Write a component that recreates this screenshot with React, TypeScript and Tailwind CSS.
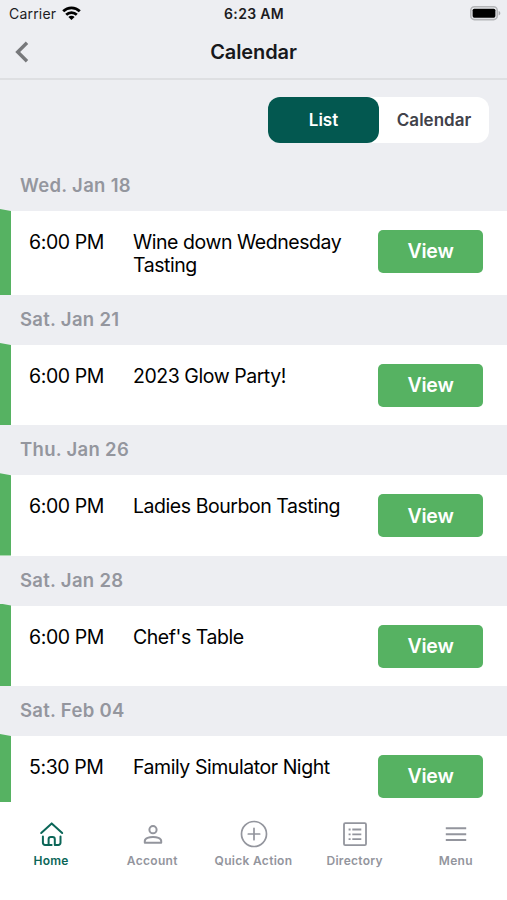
import clsx from "clsx";

const events = [
  { date: "Wed. Jan 18", time: "6:00 PM", title: "Wine down Wednesday Tasting", height: "h-[84px]" },
  { date: "Sat. Jan 21", time: "6:00 PM", title: "2023 Glow Party!", height: "h-[80.3px]" },
  { date: "Thu. Jan 26", time: "6:00 PM", title: "Ladies Bourbon Tasting", height: "h-[80.3px]" },
  { date: "Sat. Jan 28", time: "6:00 PM", title: "Chef's Table", height: "h-[80.3px]" },
  { date: "Sat. Feb 04", time: "5:30 PM", title: "Family Simulator Night", height: "h-[80.3px]" },
];

const HomeIcon = () => (
  <svg width="26" height="28" viewBox="0 0 26 28" fill="none" stroke="currentColor" strokeWidth="2" strokeLinecap="round" strokeLinejoin="round">
    <path d="M2.2 13 12.7 3.4 23.2 13" />
    <path d="M3.9 16.6v6.2a2.1 2.1 0 0 0 2.1 2.1h3.6v-5.7a2.2 2.2 0 0 1 2.2-2.2h1.8a2.2 2.2 0 0 1 2.2 2.2v5.7h3.6a2.1 2.1 0 0 0 2.1-2.1v-6.2M9.6 24.9h3" />
  </svg>
);

const AccountIcon = () => (
  <svg width="26" height="28" viewBox="0 0 26 28" fill="none" stroke="currentColor" strokeWidth="2" strokeLinejoin="round">
    <circle cx="13" cy="9.7" r="3.6" />
    <path d="M4.8 22.7v-1.8c0-2.7 4.5-4 8.2-4s8.2 1.3 8.2 4v1.8z" />
  </svg>
);

const QuickActionIcon = () => (
  <svg width="28" height="28" viewBox="0 0 28 28" fill="none" stroke="currentColor" strokeWidth="1.7" strokeLinecap="round">
    <circle cx="14" cy="14" r="12.5" />
    <path d="M14 8.3v11.4M8.3 14h11.4" />
  </svg>
);

const DirectoryIcon = () => (
  <svg width="26" height="28" viewBox="0 0 26 28" fill="none" stroke="currentColor" strokeWidth="1.8">
    <rect x="2" y="3.2" width="22" height="22" rx="1.2" />
    <path d="M6.6 9.5h2M6.6 14.3h2M6.6 19.1h2M10.3 9.5h9M10.3 14.3h9M10.3 19.1h9" />
  </svg>
);

const MenuIcon = () => (
  <svg width="26" height="28" viewBox="0 0 26 28" fill="none" stroke="currentColor" strokeWidth="2.1">
    <path d="M2.8 8.3h20.4M2.8 14.2h20.4M2.8 20h20.4" />
  </svg>
);

const tabs = [
  { label: "Home", icon: HomeIcon, active: true },
  { label: "Account", icon: AccountIcon },
  { label: "Quick Action", icon: QuickActionIcon },
  { label: "Directory", icon: DirectoryIcon },
  { label: "Menu", icon: MenuIcon },
];

const StatusBar = () => (
  <div className="grid h-[27px] grid-cols-3 items-center pl-[9px] pr-[6px] text-[14px] text-[#1c1c1f]">
    <div className="flex items-center gap-[6px]">
      <span className="tracking-[0.2px]">Carrier</span>
      <svg width="19" height="15" viewBox="0 0 19 15" fill="none" stroke="black" strokeWidth="2.7">
        <path d="M1.2 5.3a11.8 11.8 0 0 1 16.6 0M4.2 8.8a7.5 7.5 0 0 1 10.6 0" />
        <path d="M9.5 14 6.4 11a4.4 4.4 0 0 1 6.2 0z" fill="black" stroke="none" />
      </svg>
    </div>
    <span className="pr-[2px] text-center font-semibold tracking-[0.3px]">6:23 AM</span>
    <svg className="justify-self-end" width="31" height="15" viewBox="0 0 31 15">
      <rect x="0.8" y="0.8" width="26.4" height="12.8" rx="3.6" fill="none" stroke="#b4b5b8" strokeWidth="1.6" />
      <rect x="2.6" y="2.7" width="22.8" height="9" rx="1.6" fill="black" />
      <path d="M28.6 5c2.3.7 2.3 3.7 0 4.4z" fill="#a9aaad" />
    </svg>
  </div>
);

const App = () => {
  return (
    <div className="flex h-[900px] w-[507px] flex-col overflow-hidden bg-white font-['Inter','Liberation_Sans',sans-serif]">
      <header className="h-[80px] shrink-0 border-b-2 border-[#dedfe2] bg-[#edeef2]">
        <StatusBar />
        <div className="grid h-[50px] grid-cols-[60px_1fr_60px] items-center">
          <button aria-label="Back" className="pl-[15px]">
            <svg width="14" height="22" viewBox="0 0 14 22" fill="none" stroke="#77787b" strokeWidth="3.4">
              <path d="M12 1.8 2.7 11l9.3 9.2" />
            </svg>
          </button>
          <h1 className="text-center text-[20px] font-semibold tracking-[-0.1px] text-[#17181b]">Calendar</h1>
        </div>
      </header>

      <main className="h-[722px] shrink-0 overflow-hidden bg-[#edeef2]">
        <div className="flex h-[81px] justify-end pr-[18px] pt-[17px]">
          <div className="flex h-[46px] w-[221px] rounded-xl bg-white text-[17px] font-semibold">
            <button className="w-[111px] rounded-xl bg-[#035850] pt-[2px] text-white">List</button>
            <button className="flex-1 pt-[2px] text-[#41424a]">Calendar</button>
          </div>
        </div>

        {events.map((event) => (
          <section key={event.date}>
            <h2 className="flex h-[50px] items-center pl-[20px] text-[18.5px] font-semibold tracking-[0.3px] text-[#94969e]">{event.date}</h2>
            <div className={clsx("flex bg-white", event.height)}>
              {/* Stripe rises slightly above the row on its outer edge */}
              <div className="-mt-[2px] w-[11px] shrink-0 bg-[#56b262] [clip-path:polygon(0_0,100%_2px,100%_100%,0_100%)]" />
              <span className="w-[122px] shrink-0 pl-[18px] pt-[20px] text-[19.5px] leading-[23px] tracking-[-0.4px] text-black">{event.time}</span>
              <p className="w-[245px] shrink-0 pr-[20px] pt-[20px] text-[19.5px] leading-[23px] tracking-[-0.45px] text-black">{event.title}</p>
              <button className="mt-[19px] h-[43px] w-[105px] rounded-[5px] bg-[#56b262] pt-px text-[19.5px] font-semibold tracking-[-0.2px] text-white">View</button>
            </div>
          </section>
        ))}
      </main>

      <nav className="grid flex-1 grid-cols-5 bg-white pl-px pt-[18px]">
        {tabs.map(({ label, icon: Icon, active }) => (
          <button key={label} className={clsx("flex flex-col items-center self-start", active ? "text-[#0b6658]" : "text-[#93959d]")}>
            <Icon />
            <span className="mt-[5px] whitespace-nowrap pr-px text-[12px] font-semibold leading-[16px] tracking-[0.3px]">{label}</span>
          </button>
        ))}
      </nav>
    </div>
  );
};

export default App;
